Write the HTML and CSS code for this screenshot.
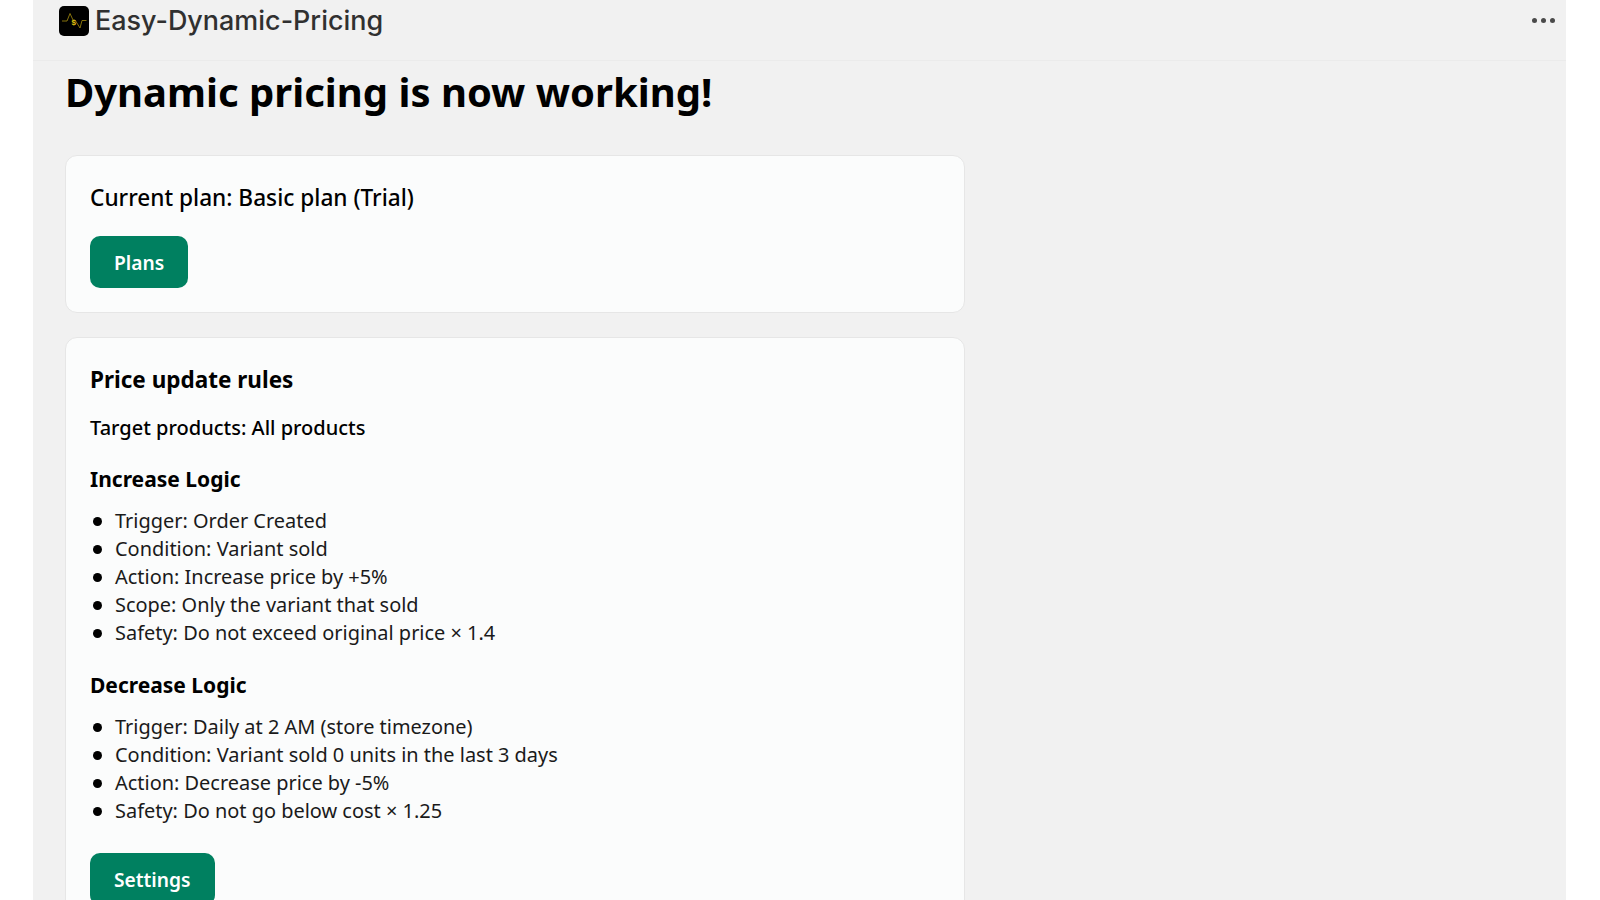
FILE: index.html
```html
<!DOCTYPE html>
<html>
  <head>
    <meta name="viewport" content="width=device-width, initial-scale=1">
    <title>Easy-Dynamic-Pricing</title>
    <link rel="stylesheet" href="styles.css">
  </head>

  <body>
    <div class="frame">
      <header class="topbar">
        <div class="brand">
          <svg class="logo" viewBox="0 0 30 30" width="30" height="30">
            <rect width="30" height="30" rx="5" fill="#000"/>
            <path d="M3 15H8L11 7.500L14 14H16L21 22L23 14.500H27.500" fill="none" stroke="#a88f10" stroke-width="0.800"/>
            <text x="12.500" y="18.500" class="logo-s">$</text>
          </svg>
          <span class="app-name">Easy-Dynamic-Pricing</span>
        </div>
        <div class="dots"><span></span><span></span><span></span></div>
      </header>

      <main class="content">
        <h1>Dynamic pricing is now working!</h1>

        <section class="card">
          <p class="plan">Current plan: Basic plan (Trial)</p>
          <button class="button">Plans</button>
        </section>

        <section class="card">
          <h2>Price update rules</h2>
          <p class="target">Target products: All products</p>

          <h3>Increase Logic</h3>
          <ul>
            <li>Trigger: Order Created</li>
            <li>Condition: Variant sold</li>
            <li>Action: Increase price by +5%</li>
            <li>Scope: Only the variant that sold</li>
            <li>Safety: Do not exceed original price × 1.4</li>
          </ul>

          <h3>Decrease Logic</h3>
          <ul class="last-list">
            <li>Trigger: Daily at 2 AM (store timezone)</li>
            <li>Condition: Variant sold 0 units in the last 3 days</li>
            <li>Action: Decrease price by -5%</li>
            <li>Safety: Do not go below cost × 1.25</li>
          </ul>

          <button class="button">Settings</button>
        </section>
      </main>
    </div>
  </body>
</html>
```

FILE: styles.css
```css
html, body {
  height: 100%;
}

body {
  margin: 0;
  padding: 0 34px 0 33px;
  overflow: hidden;
  background: #fff;
  color: #000;
  font-family: "Noto Sans", "Open Sans", sans-serif;
}

.frame {
  height: 100%;
  background: #f1f1f1;
}

/* Top bar */
.topbar {
  display: flex;
  align-items: center;
  justify-content: space-between;
  height: 61px;
  padding: 0 11px 18px 26px;
  box-sizing: border-box;
  border-bottom: 1px solid #ebebeb;
}

.brand {
  display: flex;
  align-items: center;
  gap: 6px;
}

.logo {
  display: block;
}

.logo-s {
  font-family: "Liberation Sans", sans-serif;
  font-size: 8px;
  font-weight: 700;
  fill: #e0c010;
}

.app-name {
  margin-top: -2px;
  font-family: Inter, sans-serif;
  font-size: 26.950px;
  font-weight: 500;
  color: #303030;
}

.dots {
  display: flex;
  gap: 4px;
  margin-top: -2px;
}

.dots span {
  width: 5px;
  height: 5px;
  border-radius: 50%;
  background: #4a4a4a;
}

/* Main column */
.content {
  width: 900px;
  padding-left: 32px;
}

h1 {
  margin: 5px 0 37px;
  font-size: 40px;
  line-height: 52px;
  font-weight: 700;
}

.card {
  margin-bottom: 24px;
  padding: 24px;
  background: #fbfcfc;
  border: 1px solid #e6e6e6;
  border-radius: 12px;
}

.plan {
  margin: 0 0 20px;
  font-size: 22.650px;
  line-height: 36px;
  font-weight: 500;
}

h2 {
  margin: 0 0 16px;
  font-size: 22.500px;
  line-height: 36px;
  font-weight: 700;
}

.target {
  margin: 0 0 22px;
  font-size: 20px;
  line-height: 28px;
  font-weight: 500;
}

h3 {
  margin: 0 0 13px;
  font-size: 21px;
  line-height: 30px;
  font-weight: 700;
}

ul {
  margin: 0 0 23px;
  padding: 0;
  list-style: none;
  font-size: 19.950px;
  line-height: 28px;
  color: #1a1a1a;
}

li {
  display: flex;
  align-items: center;
}

li::before {
  content: "";
  width: 9px;
  height: 9px;
  margin: 0 13px 0 3px;
  border-radius: 50%;
  background: #000;
}

.last-list {
  margin-bottom: 28px;
}

.button {
  display: block;
  height: 52px;
  padding: 1px 24px 0;
  background: #008060;
  border: none;
  border-radius: 10px;
  color: #fff;
  font-family: inherit;
  font-size: 19.200px;
  font-weight: 600;
}
```
